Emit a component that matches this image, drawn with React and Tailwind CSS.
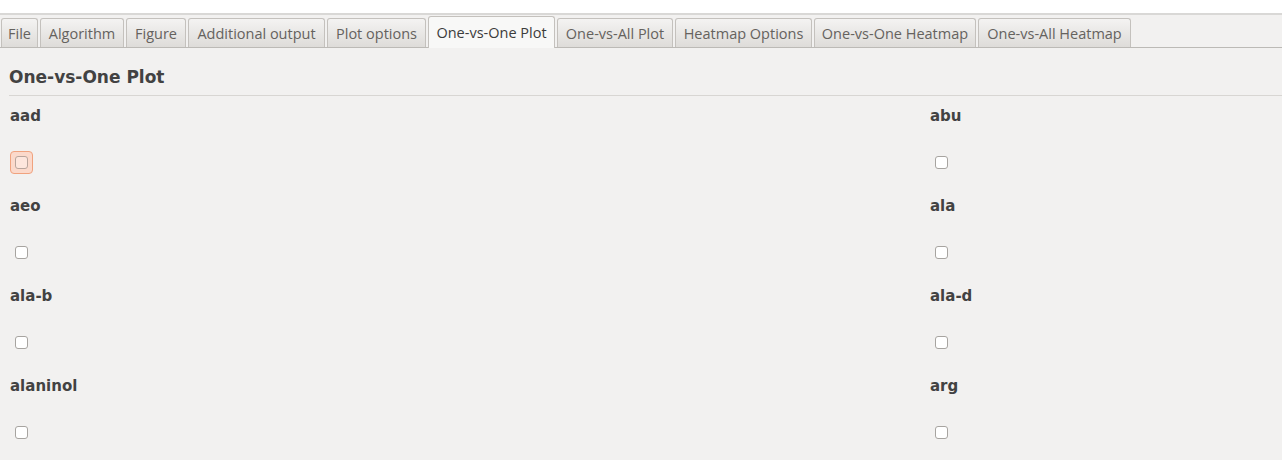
const TABS = [
  { label: 'File', w: 37 },
  { label: 'Algorithm', w: 84 },
  { label: 'Figure', w: 60 },
  { label: 'Additional output', w: 137 },
  { label: 'Plot options', w: 99 },
  { label: 'One-vs-One Plot', w: 127, active: true },
  { label: 'One-vs-All Plot', w: 116 },
  { label: 'Heatmap Options', w: 137 },
  { label: 'One-vs-One Heatmap', w: 162 },
  { label: 'One-vs-All Heatmap', w: 153 },
]

const ROWS = [
  ['aad', 'abu'],
  ['aeo', 'ala'],
  ['ala-b', 'ala-d'],
  ['alaninol', 'arg'],
]

function Check({ focused }) {
  if (focused) {
    return (
      <span className="w-[23px] h-[23px] -ml-[5px] rounded-[4px] border border-[#f0a27e] bg-[#fbd9cb] flex items-center justify-center">
        <span className="w-[13px] h-[13px] rounded-[3px] border border-[#b9a59c] bg-[#fde6dd]" />
      </span>
    )
  }
  return <span className="block w-[13px] h-[13px] rounded-[3px] border border-[#a7a4a0] bg-white" />
}

export default function App() {
  return (
    <div className="w-[1282px] h-[460px] bg-[#f2f1f0] overflow-hidden" style={{ fontFamily: '"DejaVu Sans", sans-serif' }}>
      <div className="h-[13px] bg-white" />
      <div className="h-[2px] bg-[#d9d8d6]" />
      <div className="flex items-end h-[33px] border-b border-[#bcbab6] pl-[1px] gap-[2px]" style={{ fontFamily: '"Open Sans", sans-serif' }}>
        {TABS.map((t) =>
          t.active ? (
            <div
              key={t.label}
              className="h-[32px] -mb-px pt-[1px] flex items-center justify-center rounded-t-[3px] border border-b-0 border-[#c4c1bd] bg-[#f8f8f7] text-[14.5px] text-[#3c3c3c]"
              style={{ width: t.w }}
            >
              {t.label}
            </div>
          ) : (
            <div
              key={t.label}
              className="h-[29px] pt-[2px] flex items-center justify-center rounded-t-[3px] border border-b-0 border-[#c4c1bd] bg-gradient-to-b from-[#f4f3f2] to-[#dedcd9] text-[14.5px] text-[#65625e]"
              style={{ width: t.w }}
            >
              {t.label}
            </div>
          )
        )}
      </div>
      <div className="pl-[9px]">
        <h2 className="text-[17px] font-bold text-[#424242] pt-[18px] leading-[22px] pb-[7px] border-b border-[#d8d6d3]">
          One-vs-One Plot
        </h2>
        <div className="grid grid-cols-[920px_1fr]">
          {ROWS.map((row, ri) =>
            row.map((name, ci) => (
              <div key={name} className="h-[90px] pl-[1px] pt-[10px]">
                <div className="text-[15px] font-bold text-[#424242] leading-[20px]">{name}</div>
                <div className="h-[23px] mt-[25px] pl-[5px] flex items-center">
                  <Check focused={ri === 0 && ci === 0} />
                </div>
              </div>
            ))
          )}
        </div>
      </div>
    </div>
  )
}
